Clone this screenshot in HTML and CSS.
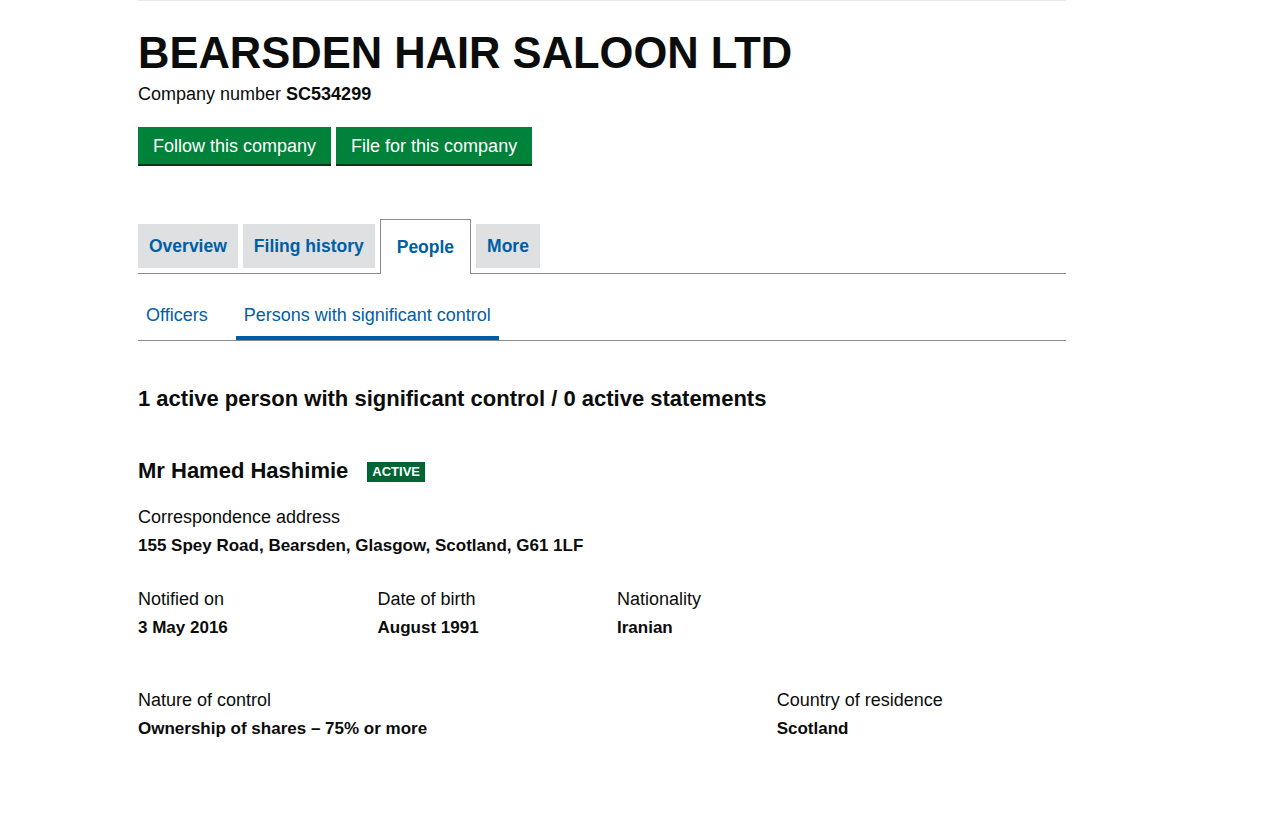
FILE: index.html
```html
<!DOCTYPE html>
<html lang="en">
<head>
<meta charset="utf-8">
<title>BEARSDEN HAIR SALOON LTD - Persons with significant control</title>
<link rel="stylesheet" href="styles.css">
</head>
<body>
<main class="page">
  <div class="topline"></div>
  <h1 class="company-name">BEARSDEN HAIR SALOON LTD</h1>
  <p class="company-number">Company number <strong>SC534299</strong></p>
  <div class="actions">
    <a class="button" href="#">Follow this company</a>
    <a class="button" href="#">File for this company</a>
  </div>

  <nav class="tabs">
    <a class="tab" href="#">Overview</a>
    <a class="tab" href="#">Filing history</a>
    <a class="tab active" href="#">People</a>
    <a class="tab" href="#">More</a>
  </nav>

  <nav class="subtabs">
    <a class="subtab" href="#">Officers</a>
    <a class="subtab active" href="#">Persons with significant control</a>
  </nav>

  <h2 class="summary">1 active person with significant control / 0 active statements</h2>

  <section class="psc">
    <h3 class="psc-name">Mr Hamed Hashimie <span class="badge">ACTIVE</span></h3>
    <dl class="field">
      <dt>Correspondence address</dt>
      <dd>155 Spey Road, Bearsden, Glasgow, Scotland, G61 1LF</dd>
    </dl>
    <div class="row quarters">
      <dl class="field"><dt>Notified on</dt><dd>3 May 2016</dd></dl>
      <dl class="field"><dt>Date of birth</dt><dd>August 1991</dd></dl>
      <dl class="field"><dt>Nationality</dt><dd>Iranian</dd></dl>
    </div>
    <div class="row thirds">
      <dl class="field"><dt>Nature of control</dt><dd>Ownership of shares – 75% or more</dd></dl>
      <dl class="field"><dt>Country of residence</dt><dd>Scotland</dd></dl>
    </div>
  </section>
</main>
</body>
</html>
```

FILE: styles.css
```css
* { box-sizing: border-box; }
html, body { margin: 0; padding: 0; background: #fff; }
body {
  font-family: "Liberation Sans", Arial, sans-serif;
  color: #0b0c0c;
}
.page {
  width: 928px;
  margin-left: 138px;
}
.topline {
  height: 1px;
  background: #e8e8e8;
}
.company-name {
  margin: 27px 0 0;
  font-size: 43.5px;
  line-height: 50px;
  font-weight: 700;
  letter-spacing: 0;
}
.company-number {
  margin: 4px 0 0;
  font-size: 18px;
  line-height: 24px;
}
.actions {
  display: flex;
  gap: 5px;
  margin-top: 21px;
}
.button {
  display: block;
  background: #00823b;
  color: #fff;
  text-decoration: none;
  font-size: 18px;
  line-height: 24px;
  padding: 7px 15px 6px;
  box-shadow: 0 2px 0 #003618;
}
.tabs {
  display: flex;
  align-items: flex-end;
  gap: 5px;
  margin-top: 55px;
  border-bottom: 1px solid #8b8b8b;
  height: 55px;
}
.tab {
  display: block;
  background: #dee0e2;
  color: #005ea5;
  font-weight: 700;
  font-size: 17.5px;
  line-height: 24px;
  text-decoration: none;
  padding: 10px 11px 10px;
  margin-bottom: 5px;
}
.tab.active {
  background: #fff;
  border: 1px solid #8b8b8b;
  border-bottom: none;
  padding: 15px 16px 15px;
  margin-bottom: -1px;
}
.subtabs {
  display: flex;
  border-bottom: 1px solid #8b8b8b;
  margin-top: 0;
}
.subtab {
  display: block;
  color: #005ea5;
  text-decoration: none;
  font-size: 18px;
  line-height: 24px;
  padding: 29px 8px 9px;
  margin-right: 20px;
  border-bottom: 4px solid transparent;
}
.subtab.active {
  border-bottom-color: #005ea5;
}
.summary {
  margin: 44px 0 0;
  font-size: 22px;
  line-height: 28px;
  font-weight: 700;
}
.psc { margin-top: 44px; }
.psc-name {
  margin: 0;
  font-size: 22px;
  line-height: 28px;
  font-weight: 700;
  display: flex;
  align-items: center;
  gap: 19px;
}
.badge {
  display: inline-block;
  background: #006435;
  color: #fff;
  font-size: 13px;
  line-height: 16px;
  font-weight: 700;
  padding: 2px 5px 2px;
  margin-top: 2px;
}
.field { margin: 0; }
.field dt {
  font-size: 18px;
  line-height: 24px;
}
.field dd {
  margin: 5px 0 0;
  font-size: 17px;
  line-height: 24px;
  font-weight: 700;
}
.psc > .field { margin-top: 20px; }
.row {
  display: grid;
  margin: 0 -15px;
}
.row > .field { padding: 0 15px; }
.quarters {
  grid-template-columns: repeat(4, 1fr);
  margin-top: 29px;
}
.thirds {
  grid-template-columns: 2fr 1fr;
  margin-top: 48px;
}
```
